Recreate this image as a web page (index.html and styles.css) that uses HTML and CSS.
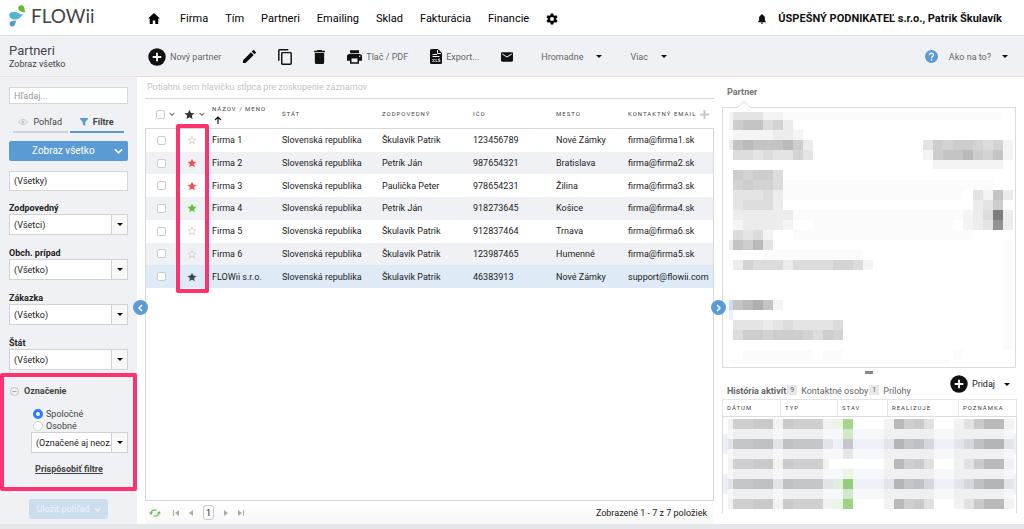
FILE: index.html
```html
<!DOCTYPE html>
<html lang="sk">
<head>
<meta charset="utf-8">
<meta name="viewport" content="width=device-width, initial-scale=1">
<title>FLOWii – Partneri</title>
<link rel="stylesheet" href="styles.css">
</head>
<body>
<svg class="defs" aria-hidden="true">
  <symbol id="star" viewBox="0 0 24 24"><path d="M12 1.500l3.200 7 7.600.8-5.700 5.100 1.600 7.600-6.700-3.900-6.700 3.900 1.600-7.600L1.200 9.300l7.600-.8z"/></symbol>
  <symbol id="star-o" viewBox="0 0 24 24"><path d="M12 3l2.700 6.200 6.700.6-5.100 4.500 1.500 6.600-5.800-3.500-5.800 3.500 1.500-6.600L2.600 9.800l6.700-.6z" fill="none" stroke="currentColor" stroke-width="2"/></symbol>
  <symbol id="caret" viewBox="0 0 8 4"><path d="M0 0h8L4 4z"/></symbol>
  <symbol id="chev" viewBox="0 0 10 6"><path d="M1 1l4 4 4-4" fill="none" stroke="currentColor" stroke-width="1.700"/></symbol>
  <symbol id="plus" viewBox="0 0 18 18"><circle cx="9" cy="9" r="8.700"/><path d="M9 4.700v8.600M4.700 9h8.600" stroke="#fff" stroke-width="1.800"/></symbol>
</svg>

<header class="top">
  <a class="logo" href="#" aria-label="FLOWii">
    <svg width="18" height="22" viewBox="0 0 18 22"><path d="M9.500 2C10.500-.2 14-.5 15 2c.7 1.700.5 3.500 1.300 5.300C12.500 7.300 8.300 5.500 9.500 2z" fill="#66b92e"/><path d="M14.500 9.500c-2.500 1.500-3.500 4.500-7.500 5C3 15 0 12.800.2 10 .5 6.800 4.500 6 7.500 7.200c2.500 1 4.500 2.600 7 2.300z" fill="#54b8cc"/><path d="M7.300 15.500c-1 1.500-.8 5.700-3.800 6-2.800.3-3.700-3-2.300-4.500 1.500-1.500 3.800-.7 6.100-1.500z" fill="#5a9ad4"/></svg>
    <span>FLOWii</span>
  </a>
  <nav class="menu">
    <a href="#" aria-label="Domov"><svg width="12" height="11" viewBox="0 0 24 22"><path d="M12 0L0 11h3.500v11h6v-7h5v7h6V11H24z"/></svg></a>
    <a href="#">Firma</a><a href="#">Tím</a><a href="#">Partneri</a><a href="#">Emailing</a><a href="#">Sklad</a><a href="#">Fakturácia</a><a href="#">Financie</a>
    <a href="#" aria-label="Nastavenia"><svg width="12" height="12" viewBox="0 0 24 24"><path fill-rule="evenodd" d="M9.500 1h5l.6 3.300 2.200 1.300 3.200-1.200L23 8.700l-2.600 2.200v2.200l2.600 2.200-2.500 4.300-3.200-1.200-2.200 1.300-.6 3.300h-5l-.6-3.300-2.200-1.300-3.200 1.200L1 15.300l2.600-2.200v-2.200L1 8.700l2.500-4.300 3.200 1.200 2.200-1.300zM12 8a4 4 0 100 8 4 4 0 000-8z"/></svg></a>
  </nav>
  <a class="account" href="#"><svg width="8" height="10" viewBox="0 0 18 22"><path d="M9 0c1 0 1.600.8 1.600 1.800C14 2.600 15.500 5.500 15.500 9v5.500L18 17v1.300H0V17l2.500-2.500V9C2.500 5.500 4 2.600 7.400 1.800 7.400.8 8 0 9 0zM6.500 19.500h5C11.500 21 10.400 22 9 22s-2.500-1-2.500-2.500z"/></svg><span>ÚSPEŠNÝ PODNIKATEĽ s.r.o., Patrik Škulavík</span></a>
</header>

<div class="toolbar">
  <div class="heading"><h1>Partneri</h1><p>Zobraz všetko</p></div>
  <div class="tools">
    <button type="button" class="t-new"><svg width="18" height="18"><use href="#plus"/></svg>Nový partner</button>
    <button type="button" aria-label="Upraviť"><svg width="13" height="13" viewBox="0 0 18 18"><path d="M0 14.300V18h3.700L14.800 6.900l-3.700-3.700zM17.700 4c.4-.4.4-1 0-1.400L15.400.3c-.4-.4-1-.4-1.400 0l-1.900 1.900 3.700 3.700z"/></svg></button>
    <button type="button" aria-label="Kopírovať"><svg width="14" height="16" viewBox="0 0 19 22"><path d="M14 0H2C.9 0 0 .9 0 2v14h2V2h12zm3 4H6c-1.100 0-2 .9-2 2v14c0 1.100.9 2 2 2h11c1.100 0 2-.9 2-2V6c0-1.100-.9-2-2-2zm0 16H6V6h11z"/></svg></button>
    <button type="button" aria-label="Odstrániť"><svg width="11" height="14" viewBox="0 0 14 18"><path d="M1 16c0 1.100.9 2 2 2h8c1.100 0 2-.9 2-2V4H1zM14 1h-3.500l-1-1h-5l-1 1H0v2h14z"/></svg></button>
    <button type="button" class="t-print"><svg width="15" height="14" viewBox="0 0 20 18"><path fill-rule="evenodd" d="M17 5H3C1.300 5 0 6.300 0 8v6h4v4h12v-4h4V8c0-1.700-1.300-3-3-3zm-3 11H6v-5h8zm3-7a1 1 0 110-2 1 1 0 010 2zM16 0H4v4h12z"/></svg>Tlač / PDF</button>
    <button type="button" class="t-export"><svg width="12" height="15" viewBox="0 0 24 30"><path d="M3 0h13l8 8v19a3 3 0 01-3 3H3a3 3 0 01-3-3V3a3 3 0 013-3z"/><path d="M15 2v7h7M5 11h9M5 15h14" fill="none" stroke="#f0f1f5" stroke-width="2"/><path d="M5 20l4 6m0-6l-4 6m7-6v5h3m5-5h-3v2.500h3V25h-3" fill="none" stroke="#f0f1f5" stroke-width="1.600"/></svg>Export...</button>
    <button type="button" class="t-mail" aria-label="Email"><svg width="12" height="10" viewBox="0 0 20 16"><path d="M18 0H2C.9 0 0 .9 0 2v12c0 1.100.9 2 2 2h16c1.100 0 2-.9 2-2V2c0-1.100-.9-2-2-2zm0 4l-8 5-8-5V2l8 5 8-5z"/></svg></button>
    <button type="button" class="drop t-bulk">Hromadne<svg class="caret"><use href="#caret"/></svg></button>
    <button type="button" class="drop">Viac<svg class="caret"><use href="#caret"/></svg></button>
    <button type="button" class="drop help"><svg width="13" height="13" viewBox="0 0 26 26"><circle cx="13" cy="13" r="13" fill="#5b9bd3"/><path d="M9 10.500c0-5.500 8-5.300 8-.5 0 3-4 3.300-4 6.500" fill="none" stroke="#fff" stroke-width="2.600"/><path d="M11.600 18.500h2.800v2.800h-2.800z" fill="#fff"/></svg>Ako na to?<svg class="caret"><use href="#caret"/></svg></button>
  </div>
</div>

<div class="content">
  <aside class="sidebar">
    <input class="search" type="text" placeholder="Hľadaj..." aria-label="Hľadaj">
    <div class="views">
      <button type="button"><svg width="10" height="6" viewBox="0 0 20 12"><path d="M1 6c4-6.500 14-6.500 18 0-4 6.500-14 6.500-18 0z" fill="none" stroke="#c4c6ca" stroke-width="2"/><circle cx="10" cy="6" r="3.200" fill="#c4c6ca"/></svg>Pohľad</button>
      <button type="button" class="on"><svg width="8" height="8" viewBox="0 0 16 16"><path d="M0 0h16v2l-5.500 6v8l-5-3V8L0 2z" fill="#5b9bd3"/></svg>Filtre</button>
    </div>
    <button type="button" class="primary"><span>Zobraz všetko</span><svg width="9" height="6"><use href="#chev"/></svg></button>
    <input class="plain" type="text" value="(Všetky)" aria-label="Typ">
    <div class="field"><label for="f1">Zodpovedný</label><div class="select"><select id="f1"><option>(Všetci)</option></select><i><svg class="caret"><use href="#caret"/></svg></i></div></div>
    <div class="field"><label for="f2">Obch. prípad</label><div class="select"><select id="f2"><option>(Všetko)</option></select><i><svg class="caret"><use href="#caret"/></svg></i></div></div>
    <div class="field"><label for="f3">Zákazka</label><div class="select"><select id="f3"><option>(Všetko)</option></select><i><svg class="caret"><use href="#caret"/></svg></i></div></div>
    <div class="field"><label for="f4">Štát</label><div class="select"><select id="f4"><option>(Všetko)</option></select><i><svg class="caret"><use href="#caret"/></svg></i></div></div>
    <section class="marking">
      <h2><svg width="9" height="9" viewBox="0 0 18 18"><circle cx="9" cy="9" r="8" fill="none" stroke="#999"/><path d="M5 9h8" stroke="#888" stroke-width="1.500"/></svg>Označenie</h2>
      <div class="marking-body">
        <label class="radio"><input type="radio" name="mark" checked>Spoločné</label>
        <label class="radio"><input type="radio" name="mark">Osobné</label>
        <div class="select"><select aria-label="Označenie"><option>(Označené aj neoz...</option></select><i><svg class="caret"><use href="#caret"/></svg></i></div>
      </div>
      <a href="#">Prispôsobiť filtre</a>
    </section>
    <button type="button" class="save" disabled>Uložiť pohľad<svg width="7" height="5"><use href="#chev"/></svg></button>
    <button type="button" class="fold" aria-label="Skryť filtre"><svg width="5" height="8" viewBox="0 0 5 8"><path d="M4 1L1 4l3 3" fill="none" stroke="#fff" stroke-width="1.500"/></svg></button>
  </aside>

  <main class="list">
    <p class="grouping">Potiahni sem hlavičku stĺpca pre zoskupenie záznamov</p>
    <div class="grid">
      <table>
        <colgroup><col class="c1"><col class="c2"><col class="c3"><col class="c4"><col class="c5"><col class="c6"><col class="c7"><col class="c8"></colgroup>
        <thead><tr>
          <th><span class="pick"><input type="checkbox" aria-label="Označiť všetko"><svg width="6" height="4"><use href="#chev"/></svg></span></th>
          <th><span class="pick"><svg class="big" width="11" height="11"><use href="#star"/></svg><svg width="6" height="4"><use href="#chev"/></svg></span></th>
          <th><span class="sorted">Názov / meno<svg width="8" height="8" viewBox="0 0 8 8"><path d="M4 8V1M1 4l3-3 3 3" fill="none" stroke="#111" stroke-width="1.200"/></svg></span></th>
          <th>Štát</th><th>Zodpovedný</th><th>IČO</th><th>Mesto</th>
          <th><span class="last">Kontaktný email<svg width="9" height="9" viewBox="0 0 9 9"><path d="M4.500 0v9M0 4.500h9" stroke="#c8c8c8" stroke-width="2"/></svg></span></th>
        </tr></thead>
        <tbody>
          <tr><td><input type="checkbox" aria-label="Firma 1"></td><td><svg class="s off"><use href="#star-o"/></svg></td><td>Firma 1</td><td>Slovenská republika</td><td>Škulavík Patrik</td><td>123456789</td><td>Nové Zámky</td><td>firma@firma1.sk</td></tr>
          <tr><td><input type="checkbox" aria-label="Firma 2"></td><td><svg class="s red"><use href="#star"/></svg></td><td>Firma 2</td><td>Slovenská republika</td><td>Petrík Ján</td><td>987654321</td><td>Bratislava</td><td>firma@firma2.sk</td></tr>
          <tr><td><input type="checkbox" aria-label="Firma 3"></td><td><svg class="s red"><use href="#star"/></svg></td><td>Firma 3</td><td>Slovenská republika</td><td>Paulička Peter</td><td>978654231</td><td>Žilina</td><td>firma@firma3.sk</td></tr>
          <tr><td><input type="checkbox" aria-label="Firma 4"></td><td><svg class="s green"><use href="#star"/></svg></td><td>Firma 4</td><td>Slovenská republika</td><td>Petrík Ján</td><td>918273645</td><td>Košice</td><td>firma@firma4.sk</td></tr>
          <tr><td><input type="checkbox" aria-label="Firma 5"></td><td><svg class="s off"><use href="#star-o"/></svg></td><td>Firma 5</td><td>Slovenská republika</td><td>Škulavík Patrik</td><td>912837464</td><td>Trnava</td><td>firma@firma6.sk</td></tr>
          <tr><td><input type="checkbox" aria-label="Firma 6"></td><td><svg class="s off"><use href="#star-o"/></svg></td><td>Firma 6</td><td>Slovenská republika</td><td>Škulavík Patrik</td><td>123987465</td><td>Humenné</td><td>firma@firma5.sk</td></tr>
          <tr class="current"><td><input type="checkbox" aria-label="FLOWii s.r.o."></td><td><svg class="s dark"><use href="#star"/></svg></td><td>FLOWii s.r.o.</td><td>Slovenská republika</td><td>Škulavík Patrik</td><td>46383913</td><td>Nové Zámky</td><td>support@flowii.com</td></tr>
        </tbody>
      </table>
      <div class="frame"></div>
    </div>
    <footer class="pager">
      <button type="button" class="reload" aria-label="Obnoviť"><svg width="12" height="10" viewBox="0 0 24 20"><path d="M4 11c0-5 5-9 11-6.500M20 9c0 5-5 9-11 6.500" fill="none" stroke="#5fbf45" stroke-width="2.400"/><path d="M0 9h8l-4 5zM16 11h8l-4-5z" fill="#5fbf45"/></svg></button>
      <button type="button" aria-label="Prvá"><svg width="6" height="6" viewBox="0 0 6 6"><path d="M0 0h1v6H0zM6 0v6L2 3z"/></svg></button>
      <button type="button" aria-label="Predošlá"><svg width="4" height="6" viewBox="0 0 4 6"><path d="M4 0v6L0 3z"/></svg></button>
      <button type="button" class="page">1</button>
      <button type="button" aria-label="Ďalšia"><svg width="4" height="6" viewBox="0 0 4 6"><path d="M0 0v6l4-3z"/></svg></button>
      <button type="button" aria-label="Posledná"><svg width="6" height="6" viewBox="0 0 6 6"><path d="M5 0h1v6H5zM0 0v6l4-3z"/></svg></button>
      <span>Zobrazené 1 - 7 z 7 položiek</span>
    </footer>
  </main>

  <aside class="side">
    <button type="button" class="fold" aria-label="Skryť detail"><svg width="5" height="8" viewBox="0 0 5 8"><path d="M1 1l3 3-3 3" fill="none" stroke="#fff" stroke-width="1.500"/></svg></button>
    <h2>Partner</h2>
    <div class="card">
      <svg class="notch" width="14" height="7" viewBox="0 0 14 7"><path d="M0 7l7-6.500L14 7" fill="#fff" stroke="#dcdcdc"/></svg>
      <svg class="mosaic" viewBox="-1 -1.200 29.200 25.900" preserveAspectRatio="none" aria-hidden="true">
        <g fill="#fbfbfb"><path d="M5-.8h22v.8H5zM5 6h21v1H5zM5 7h18v1H5zM6 9h17v1H6zM8 10h14v1H8zM6 11h18v1H6zM3 13h10v1H3zM27 12h1v11h-1zM1 23h7v1H1zM9 23h2v1H9zM22 23h1v1h-1zM-.4 24h22v.4h-22z"/></g>
        <g fill="#f4f4f4"><path d="M3-.8h2v.8H3zM-.4-.8H0V1h-.4zM0 1h4v1H0zM6 1h1v1H6zM27 2h1v2h-1zM19 3h1v1h-1zM20 4h7v.9h-7zM25 7h1v1h-1zM23 9h1v2h-1zM3 11h1v1H3zM0 10h1v1H0zM5 10h1v1H5zM4 18h1v1H4zM13 14h1v1h-1z"/></g>
        <g fill="#ececec"><path d="M5 0h1v1H5zM5 1h1v1H5zM7 2h1v1H7zM4 7h1v2H4zM27 7h1v1h-1zM27 9h1v2h-1zM24 8h1v3h-1zM0 9h6v1H0zM1 10h4v1H1zM0 14h1v1H0zM5 14h1v1H5zM3 20h1v1H3zM4 1h1v1H4zM-.4 2H0v1h-.4zM-.4 12H0v1h-.4z"/></g>
        <g fill="#e4e4e4"><path d="M0-.8h3v.8H0zM19 2h1v1h-1zM2 3h1v1H2zM4 3h2v1H4zM7 3h1v1H7zM0 7h3v1H0zM24 7h1v1h-1zM25 8h1v1h-1zM25 10h1v1h-1zM0 8h1v1H0zM1 11h1v1H1zM3 12h1v1H3zM0 20h3v1H0zM4 20h6v1H4z"/></g>
        <g fill="#dcdcdc"><path d="M3 0h1v1H3zM0 3h2v1H0zM3 3h1v1H3zM25 2h1v1h-1zM4 5h1v2H4zM3 7h1v1H3zM1 8h3v1H1zM25 9h1v1h-1zM0 11h1v1H0zM2 11h1v1H2zM2 14h3v1H2zM6 14h7v1H6zM5 20h1v1H5zM10 20h1v1h-1zM0 21h1v1H0zM8 21h1v1H8z"/></g>
        <g fill="#d3d3d3"><path d="M4 0h1v1H4zM6 3h1v1H6zM21 2h1v1h-1zM24 2h1v1h-1zM26 2h1v1h-1zM25 3h1v1h-1zM1 5h1v1H1zM0 6h1v1H0zM2 6h2v1H2zM1 14h1v1H1zM10 14h2v1h-2zM3 21h1v1H3zM7 21h1v1H7zM10 21h1v1h-1z"/></g>
        <g fill="#cdcdcd"><path d="M0 0h1v1H0zM6 2h1v1H6zM20 2h1v2h-1zM22 2h2v1h-2zM24 3h1v1h-1zM0 5h1v1H0zM2 5h2v1H2zM1 6h1v1H1zM26 7h1v2h-1zM1 12h1v1H1zM1 21h2v1H1zM4 21h3v1H4zM9 21h1v1H9z"/></g>
        <g fill="#c4c4c4"><path d="M1 0h2v1H1zM0 2h1v1H0zM2 2h3v1H2zM21 3h2v1h-2zM26 3h1v1h-1zM26 7h1v1h-1zM0 12h1v1H0zM3 18h1v1H3zM0 18h1v1H0z"/></g>
        <g fill="#b9babc"><path d="M1 2h1v1H1zM5 2h1v1H5zM23 3h1v1h-1zM2 12h1v1H2zM1 18h1v1H1z"/></g>
        <path d="M2 18h1v1H2z" fill="#afafaf"/><path d="M26 9h1v1h-1z" fill="#7c7c7c"/><path d="M26 10h1v1h-1z" fill="#919292"/>
        <path d="M-.4 18H0v1h-.4z" fill="#d0dceb"/><path d="M-.4 19H0v1h-.4z" fill="#edf2f9"/>
      </svg>
    </div>
    <div class="handle"></div>
    <div class="tabs">
      <a href="#" class="on">História aktivít</a><b>9</b><a href="#">Kontaktné osoby</a><b>1</b><a href="#">Prílohy</a>
      <button type="button" class="add"><svg width="18" height="18"><use href="#plus"/></svg>Pridaj<svg class="caret"><use href="#caret"/></svg></button>
    </div>
    <table class="history">
      <colgroup><col class="h1"><col class="h2"><col class="h3"><col class="h4"><col class="h5"></colgroup>
      <thead><tr><th>Dátum</th><th>Typ</th><th>Stav</th><th>Realizuje</th><th>Poznámka</th></tr></thead>
      <tbody><tr><td colspan="5">
        <svg class="mosaic" viewBox="-1 -.2 29.200 9.600" preserveAspectRatio="none" aria-hidden="true">
          <defs>
            <g id="row"><path d="M-.5 0H0v1h-.5zM4 0h1v1H4zM9 0h1v1H9zM15 0h1v1h-1zM22 0h1v1h-1zM27 0h1v1h-1z" fill="#888" fill-opacity=".11"/><path d="M0 0h2v1H0zM6 0h3v1H6zM17 0h1v1h-1z" fill="#888" fill-opacity=".4"/><path d="M2 0h2v1H2zM5 0h1v1H5zM18 0h1v1h-1zM24 0h1v1h-1z" fill="#888" fill-opacity=".45"/><path d="M16 0h1v1h-1zM25 0h2v1h-2z" fill="#888" fill-opacity=".58"/><path d="M19 0h1v1h-1zM23 0h1v1h-1z" fill="#888" fill-opacity=".25"/></g>
            <g id="gap"><path d="M-.5 0H0v1h-.5zM4 0h1v1H4zM9 0h2v1H9zM12 0h3v1h-3zM20 0h2v1h-2zM27 0h1v1h-1z" fill="#f5f7fb"/><path d="M0 0h4v1H0zM5 0h4v1H5zM15 0h5v1h-5zM22 0h5v1h-5z" fill="#f0f0f2"/></g>
          </defs>
          <path d="M-1 1.500h29.200V3.500H-1zM-1 5.500h29.200V7.500H-1z" fill="#eef0f7"/>
          <use href="#gap" y="1"/><use href="#gap" y="3"/><use href="#gap" y="5"/><use href="#gap" y="7"/>
          <use href="#row"/><use href="#row" y="2"/><use href="#row" y="4"/><use href="#row" y="6"/><use href="#row" y="8"/>
          <path d="M9.600 4h5v1h-5z" fill="#fff"/>
          <path d="M10 0h1v1h-1zM10 8h1v1h-1zM11 5h1v1h-1z" fill="#e9f6e3"/><path d="M10 6h1v1h-1z" fill="#dfeedd"/>
          <path d="M11 0h1v1h-1z" fill="#a4d68c"/><path d="M11 1h1v1h-1zM11 7h1v1h-1z" fill="#d0eac7"/><path d="M11 2h1v1h-1z" fill="#c6c5ca"/><path d="M11 3h1v1h-1z" fill="#e6e6e8"/><path d="M11 6h1v1h-1z" fill="#96cd7c"/><path d="M11 8h1v1h-1z" fill="#9dd483"/>
        </svg>
      </td></tr></tbody>
    </table>
  </aside>
</div>
<div class="bottom"></div>
</body>
</html>
```
FILE: styles.css
```css
* { box-sizing: border-box; }
body {
  margin: 0;
  min-height: 100vh;
  display: flex;
  flex-direction: column;
  font: 9px/12px Roboto, "Liberation Sans", sans-serif;
  color: #222;
  background: #fff;
}
.defs { position: absolute; width: 0; height: 0; }
h1, h2, p { margin: 0; font-size: inherit; font-weight: 400; }
a { color: inherit; text-decoration: none; }
button { border: 0; padding: 0; background: none; font: inherit; color: inherit; display: flex; align-items: center; }
svg { display: block; flex: none; fill: currentColor; }
.caret { width: 6px; height: 3px; color: #111; }
table { width: 100%; border-collapse: collapse; table-layout: fixed; }
th { font-size: 6px; font-weight: 400; letter-spacing: 1px; text-transform: uppercase; text-align: left; color: #444; padding: 0; white-space: nowrap; }
td { padding: 0; white-space: nowrap; }

/* header */
.top { height: 36px; display: flex; align-items: center; border-bottom: 1px solid #e4e4e4; }
.logo { width: 148px; padding-left: 9px; display: flex; align-items: center; gap: 4px; padding-bottom: 3px; font: 19px/24px Lato, sans-serif; color: #444; }
.menu { display: flex; align-items: center; gap: 17px; font-size: 11px; line-height: 16px; color: #000; padding-top: 2px; }
.menu a:first-child { margin-right: 3px; }
.account { margin-left: auto; padding-right: 22px; padding-top: 2px; display: flex; align-items: center; gap: 12px; font-size: 11px; font-weight: 700; color: #111; }

/* toolbar */
.toolbar { height: 41px; display: flex; align-items: center; background: #f0f1f5; border-bottom: 1px solid #eee0e2; }
.heading { width: 148px; padding: 1px 0 0 9px; color: #444; }
.heading h1 { font-size: 13px; line-height: 14px; }
.tools { flex: 1; display: flex; align-items: center; padding-top: 1px; color: #666; }
.tools button { gap: 4px; margin-right: 22px; }
.tools svg { color: #111; }
.tools .drop { gap: 13px; }
.tools .t-mail, .tools .t-bulk { margin-right: 28px; }
.tools .help { margin-left: auto; margin-right: 16px; gap: 11px; }

/* content */
.content { flex: 1; display: flex; }
.bottom { height: 5px; background: #e5e6ea; }
.fold { position: absolute; top: 223px; width: 15px; height: 15px; border-radius: 50%; background: #5b9bd3; justify-content: center; z-index: 2; }

/* filters */
.sidebar { position: relative; width: 137px; padding: 10px 9px 0; background: #f0f1f5; display: flex; flex-direction: column; }
.sidebar .fold { right: -11px; }
.sidebar input[type="text"] { width: 100%; border: 1px solid #d4d6da; background: #fff; font: inherit; padding: 0 4px; color: #222; }
.search { height: 17px; }
.search::placeholder { color: #999; }
.views { display: flex; gap: 2px; margin: 9px 4px 0; }
.views button { flex: 1; height: 20px; gap: 5px; justify-content: center; border-bottom: 2px solid #d0d1d5; color: #444; }
.views .on { border-color: #5b9bd3; font-weight: 700; }
.primary { height: 20px; margin-top: 8px; padding: 0 5px 0 23px; border-radius: 2px; background: #5b9bd3; color: #fff; font-size: 10px; justify-content: space-between; }
.plain { height: 20px; margin: 10px 0 11px; }
.sidebar .plain { border-top-color: #fff; }
.field { margin-bottom: 12px; }
.field label { display: block; font-weight: 700; }
.select { position: relative; height: 21px; }
.select select { appearance: none; width: 100%; height: 21px; border: 1px solid #d0d2d6; border-radius: 0; background: #fff; font: inherit; color: #222; padding: 0 16px 0 4px; }
.select i { position: absolute; top: 1px; right: 1px; bottom: 1px; width: 16px; border-left: 1px solid #d0d2d6; background: #f8f8f8; display: grid; place-items: center; pointer-events: none; }
.marking { margin: -9px -9px 0; border: 4px solid #fd3370; border-radius: 2px; height: 118px; padding: 8px 5px 0 6px; display: flex; flex-direction: column; }
.marking h2 { display: flex; align-items: center; gap: 5px; font-weight: 700; color: #444; line-height: 12px; }
.marking-body { margin: 11px 0 10px 21px; }
.marking select { padding: 0 12px 0 4px; }
.radio { display: flex; align-items: center; gap: 3px; height: 12px; color: #444; }
.radio input { appearance: none; width: 10px; height: 10px; margin: 0 0 0 2px; border: 1px solid #d0d0d0; border-radius: 50%; background: #fff; }
.radio input:checked { border: 3px solid #2f7df6; }
.marking > a { align-self: center; text-decoration: underline; font-weight: 700; color: #444; }
.save { align-self: center; height: 20px; margin-top: 8px; padding: 0 7px; gap: 4px; border-radius: 2px; background: #cbdeee; color: #eff5fb; }

/* partner list */
.list { flex: 1; min-width: 0; margin-left: 8px; display: flex; flex-direction: column; }
.grouping { height: 22px; padding: 4px 2px 0; color: #c4c4c4; border-bottom: 1px solid #d8d8d8; }
.grid { position: relative; flex: 1; border-bottom: 1px solid #d8d8d8; }
.grid::after { content: ""; position: absolute; inset: 29px 0 0; border: 1px solid #d8d8d8; border-bottom: 0; pointer-events: none; }
.grid table { height: 189px; }
.grid th { height: 30px; }
.c1 { width: 30px; } .c2 { width: 37px; } .c3 { width: 70px; } .c4 { width: 100px; }
.c5 { width: 91px; } .c6 { width: 83px; } .c7 { width: 72px; } .c8 { width: 86px; }
.grid tbody tr:nth-child(even) { background: #f0f1f5; }
.grid tbody .current { background: #deeaf5; }
.pick { display: flex; align-items: center; gap: 4px; padding-left: 11px; color: #777; }
th + th .pick { padding-left: 9px; }
.pick .big { color: #333; }
input[type="checkbox"] { appearance: none; display: block; width: 9px; height: 9px; margin: 0; border: 1px solid #ccc; border-radius: 2px; background: #fff; }
td input[type="checkbox"] { margin-left: 12px; }
.sorted { display: flex; flex-direction: column; gap: 2px; line-height: 10px; }
.sorted svg { margin-left: 2px; }
.last { display: flex; align-items: center; gap: 4px; }
.s { width: 10px; height: 10px; margin-left: 12px; }
.off { color: #ccc; } .red { color: #ef5350; } .green { color: #5fbf35; } .dark { color: #444; }
.frame { position: absolute; left: 31px; top: 25px; width: 33px; height: 169px; border: 4px solid #fd3370; border-radius: 2px; z-index: 1; }
.pager { height: 23px; padding: 0 7px 0 4px; display: flex; align-items: center; gap: 10px; color: #aaa; background: linear-gradient(#fff, #f8f8f8); }
.pager .reload { margin-right: 2px; }
.pager .page { width: 11px; height: 15px; justify-content: center; border: 1px solid #ccc; border-radius: 3px; color: #222; }
.pager span { margin-left: auto; color: #222; }

/* detail */
.side { position: relative; width: 302px; margin-left: 8px; padding-right: 8px; }
.side .fold { left: -11px; }
.side h2 { padding: 9px 5px 0; height: 30px; font-weight: 700; color: #777; }
.card { position: relative; height: 261px; border: 1px solid #dcdcdc; }
.notch { position: absolute; left: 14px; top: -7px; }
.mosaic { width: 100%; height: 100%; shape-rendering: crispEdges; }
.handle { width: 8px; height: 3px; margin: 3px auto 0; background: #888; }
.tabs { display: flex; align-items: center; height: 25px; padding: 9px 4px 0 5px; color: #666; }
.tabs .on { font-weight: 700; }
.tabs b { margin: 0 4px 2px 1px; padding: 0 3px; height: 10px; line-height: 10px; font-size: 7px; font-weight: 400; background: #e8e8e8; }
.tabs .add { margin: -14px 2px 0 auto; gap: 4px; color: #222; }
.tabs .add svg { color: #111; }
.add .caret { margin-left: 5px; }
.history { border: 1px solid #dcdcdc; border-bottom: 0; }
.history th { height: 17px; padding-left: 4px; border: 1px solid #e4e4e4; border-bottom-color: #dcdcdc; }
.history td { height: 96px; }
.h1 { width: 58px; } .h2 { width: 57px; } .h3 { width: 50px; } .h4 { width: 71px; } .h5 { width: 58px; }
```
